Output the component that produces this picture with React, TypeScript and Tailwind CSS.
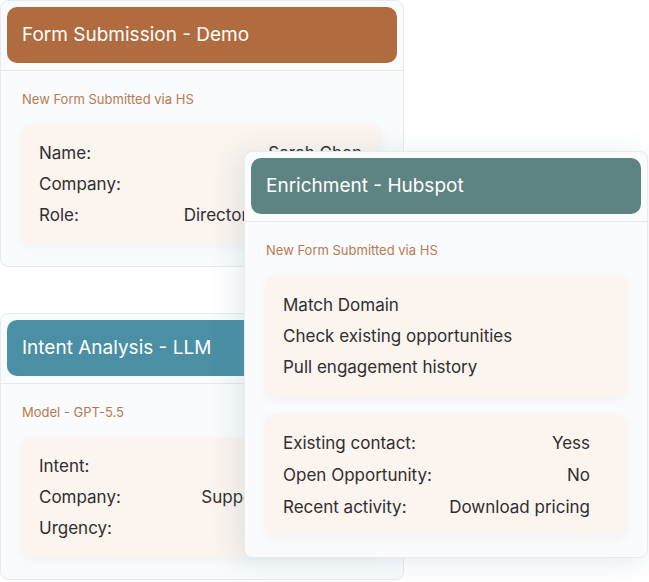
import React from "react";

type Row = { label: string; value?: string };

const font = { fontFamily: "Inter, 'Noto Sans', sans-serif" };

function Header({ title, color }: { title: string; color: string }) {
  return (
    <div className="border-b border-[#e4e9ed] px-[6px] pt-[6px] pb-[7px]">
      <div
        className={`flex h-[56px] items-center rounded-[10px] px-[15px] text-[19px] text-white ${color}`}
      >
        {title}
      </div>
    </div>
  );
}

function KeyValueBox({
  rows,
  className = "",
  rowClass = "leading-[31px]",
}: {
  rows: Row[];
  className?: string;
  rowClass?: string;
}) {
  return (
    <div
      className={`flex flex-col rounded-[8px] bg-[#fbf4ef] shadow-[0_3px_10px_rgba(120,100,80,0.06)] ${className}`}
    >
      {rows.map((r) => (
        <div key={r.label} className={`flex justify-between whitespace-nowrap ${rowClass}`}>
          <span>{r.label}</span>
          {r.value && <span>{r.value}</span>}
        </div>
      ))}
    </div>
  );
}

function Card({
  title,
  color,
  subtitle,
  children,
  className = "",
}: {
  title: string;
  color: string;
  subtitle: string;
  children: React.ReactNode;
  className?: string;
}) {
  return (
    <div
      className={`absolute flex w-[404px] flex-col overflow-hidden rounded-[8px] border border-[#e6ebef] bg-[#f9fbfc] ${className}`}
    >
      <Header title={title} color={color} />
      <div className="flex flex-col gap-[18px] px-[21px] pt-[20px]">
        <div className="text-[13px] leading-[16px] text-[#b87a50]">{subtitle}</div>
        {children}
      </div>
    </div>
  );
}

export default function App() {
  return (
    <div className="relative h-[582px] w-[649px] bg-white text-[17px] text-[#2f2f2f]" style={font}>
      <Card
        title="Form Submission - Demo"
        color="bg-[#b06c3f]"
        subtitle="New Form Submitted via HS"
        className="left-0 top-0 h-[267px]"
      >
        <KeyValueBox
          className="py-[13px] pl-[17px] pr-[20px]"
          rows={[
            { label: "Name:", value: "Sarah Chen" },
            { label: "Company:", value: "Acme Corp" },
            { label: "Role:", value: "Director of Operations" },
          ]}
        />
      </Card>

      <Card
        title="Intent Analysis - LLM"
        color="bg-[#4b8fa4]"
        subtitle="Model - GPT-5.5"
        className="left-0 top-[313px] h-[267px]"
      >
        <KeyValueBox
          className="py-[13px] pl-[17px] pr-[20px]"
          rows={[
            { label: "Intent:", value: "Demo request" },
            { label: "Company:", value: "Support Automation" },
            { label: "Urgency:", value: "High" },
          ]}
        />
      </Card>

      <Card
        title="Enrichment - Hubspot"
        color="bg-[#5d8482]"
        subtitle="New Form Submitted via HS"
        className="left-[244px] top-[151px] h-[407px] shadow-[-6px_4px_28px_rgba(90,130,150,0.16)]"
      >
        <div className="flex flex-col gap-[18px]">
          <KeyValueBox
            className="py-[14px] pl-[17px] pr-[20px]"
            rows={[
              { label: "Match Domain" },
              { label: "Check existing opportunities" },
              { label: "Pull engagement history" },
            ]}
          />
          <KeyValueBox
            className="py-[12px] pl-[17px] pr-[36px]"
            rowClass="leading-[32px]"
            rows={[
              { label: "Existing contact:", value: "Yess" },
              { label: "Open Opportunity:", value: "No" },
              { label: "Recent activity:", value: "Download pricing" },
            ]}
          />
        </div>
      </Card>
    </div>
  );
}
